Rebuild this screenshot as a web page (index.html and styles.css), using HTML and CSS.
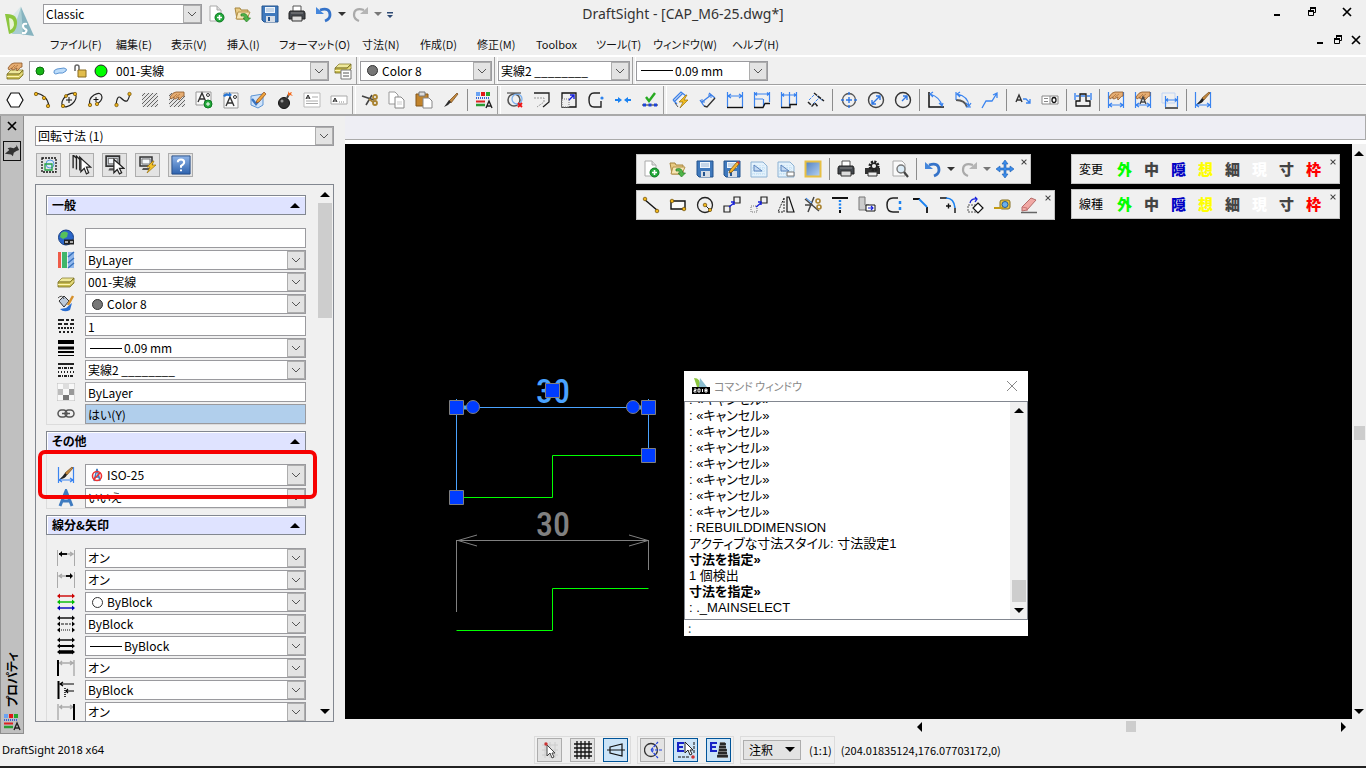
FILE: index.html
```
<!DOCTYPE html>
<html lang="ja">
<head>
<meta charset="utf-8">
<title>DraftSight - [CAP_M6-25.dwg*]</title>
<link rel="stylesheet" href="styles.css">
</head>
<body>
<svg class="sprite" aria-hidden="true">
<defs>
<linearGradient id="g-blue" x1="0" y1="0" x2="0" y2="1"><stop offset="0" stop-color="#8fb4e8"/><stop offset="1" stop-color="#2d62ae"/></linearGradient>
<linearGradient id="g-sky" x1="0" y1="0" x2="1" y2="1"><stop offset="0" stop-color="#4f7fc0"/><stop offset="1" stop-color="#b8d4f4"/></linearGradient>
</defs>
<symbol id="new" viewBox="0 0 18 18"><path d="M3 1h7l4 4v11H3z" fill="#fff" stroke="#aaa"/><path d="M10 1v4h4" fill="#ddd" stroke="#aaa"/><circle cx="12.500" cy="12.500" r="4.500" fill="#22a83a" stroke="#0c7a20"/><path d="M12.500 10v5M10 12.500h5" stroke="#fff" stroke-width="1.600"/></symbol>
<symbol id="open" viewBox="0 0 18 18"><path d="M1 3h5l1 2h7v9H3z" fill="#e9cb83" stroke="#a5843d"/><path d="M4 7h12l-3 7H2z" fill="#f7e6b4" stroke="#b4924a"/><path d="M7 9q6-2 7 4h2.500L12.500 17 9 13h2q0-3-4-2z" fill="#4fb548" stroke="#267c28" stroke-width=".7"/></symbol>
<symbol id="save" viewBox="0 0 18 18"><path d="M1 1h16v16H3l-2-2z" fill="#3f79bd" stroke="#24548e"/><path d="M4 2h10v6H4z" fill="#eef5fc"/><path d="M5 4h8M5 6h8" stroke="#9bb6d4"/><path d="M5 11h9v6H5z" fill="#d6dde6"/><path d="M7 12h2v4H7z" fill="#24548e"/></symbol>
<symbol id="saveas" viewBox="0 0 18 18"><use href="#save"/><path d="M6 13l1-3 7-8 2 2-7 8z" fill="#f5b32d" stroke="#815b12" stroke-width=".8"/><path d="M14 2l1-1 2 2-1 1z" fill="#d33"/></symbol>
<symbol id="print" viewBox="0 0 18 18"><path d="M5 1h8v6H5z" fill="#fff" stroke="#555"/><path d="M2 6h14l1 2v6H1V8z" fill="#44484e" stroke="#222"/><path d="M4 11h10v5H4z" fill="#ddd" stroke="#333"/><path d="M3 8h12" stroke="#888"/></symbol>
<symbol id="printset" viewBox="0 0 18 18"><path d="M1 8h15v6H1z" fill="#333"/><path d="M4 12h9v4H4z" fill="#eee" stroke="#333"/><circle cx="10" cy="6" r="4" fill="none" stroke="#222" stroke-width="3" stroke-dasharray="2 1.100"/><circle cx="10" cy="6" r="2.800" fill="#eee" stroke="#222" stroke-width="1.500"/></symbol>
<symbol id="preview" viewBox="0 0 18 18"><path d="M2 1h9l3 3v12H2z" fill="#fafafa" stroke="#aaa"/><circle cx="10" cy="9" r="4" fill="#dcecf7" stroke="#777" stroke-width="1.400"/><path d="M13 12l4 5" stroke="#444" stroke-width="2.200"/></symbol>
<symbol id="undo" viewBox="0 0 18 18"><path d="M5 5q10-3 10 5 0 4-5 6" fill="none" stroke="#3573c9" stroke-width="2.800"/><path d="M1 2v7h8z" fill="#4587dc"/></symbol>
<symbol id="redo" viewBox="0 0 18 18"><path d="M13 5Q3 2 3 10q0 4 5 6" fill="none" stroke="#aaa" stroke-width="2.200"/><path d="M17 2v7H9z" fill="#b5b5b5"/></symbol>
<symbol id="down" viewBox="0 0 8 18"><path d="M0 7h8L4 11z" fill="currentColor"/></symbol>
<symbol id="more" viewBox="0 0 8 18"><path d="M1 7h6v1.500H1zM1 10h6l-3 3z" fill="#2e4a74"/></symbol>
<symbol id="sheet" viewBox="0 0 18 18"><path d="M1 2h12l4 4v11H1z" fill="#e4f2fc" stroke="#8db2d3"/><path d="M4 5v9M7 5v9M10 5v9M13 5v9M2 8h14M2 11h14M2 14h14" stroke="#bcdcf2" stroke-dasharray="1 1"/><path d="M4 5v6h8z" fill="#c4daf3" stroke="#5a83bc"/></symbol>
<symbol id="sheet2" viewBox="0 0 18 18"><use href="#sheet"/><path d="M10 12h7v4h-7z" fill="#fff" stroke="#777"/></symbol>
<symbol id="view" viewBox="0 0 18 18"><path d="M1.500 1.500h15v15h-15z" fill="url(#g-sky)" stroke="#e7c044" stroke-width="2"/></symbol>
<symbol id="pan" viewBox="0 0 18 18"><path d="M9 0l3 4h-2v4h4V6l4 3-4 3v-2h-4v4h2l-3 4-3-4h2v-4H4v2L0 9l4-3v2h4V4H6z" fill="#3a8bea" stroke="#1c5cae" stroke-width=".6"/></symbol>
<symbol id="hand" viewBox="0 0 18 18"><path d="M2 6q3-5 6-5h8v4q-2 0-3 2l-2 2q-1-1 0-3L7 8q-2 0-1-2L3 8z" fill="#e6ad72" stroke="#8c5527" stroke-width=".8"/><path d="M9 3l-3 3M12 3l-4 3" stroke="#a76b34" stroke-width=".7"/></symbol>
<symbol id="layers" viewBox="0 0 18 18"><path d="M1 9l4-4h12l-4 4z" fill="#eee89a" stroke="#8a8034" stroke-width=".8"/><path d="M1 9v5h12l4-4V5l-4 4z" fill="#c7bb50" stroke="#766d24" stroke-width=".8"/><path d="M1 11.500h12l4-4" fill="none" stroke="#fff6b0"/></symbol>
<symbol id="layerhand" viewBox="0 0 18 18"><g transform="translate(0 3)"><use href="#layers" width="18" height="18"/></g><use href="#hand"/></symbol>
<symbol id="layerlist" viewBox="0 0 18 18"><use href="#layers" y="-3"/><path d="M7 8h10v9H7z" fill="#fff" stroke="#777"/><path d="M9 11h6M9 14h6" stroke="#555"/></symbol>
<symbol id="poly" viewBox="0 0 18 18"><path d="M5 2h8l4 7-4 7H5L1 9z" fill="#fff" stroke="#111" stroke-width="1.200"/></symbol>
<symbol id="arc" viewBox="0 0 18 18"><path d="M2 2q12 1 14 13" fill="none" stroke="#222" stroke-width="1.200"/><g fill="#efb51c" stroke="#6c4c05" stroke-width=".7"><circle cx="3" cy="3" r="1.700"/><circle cx="11" cy="7" r="1.700"/><circle cx="15" cy="15" r="1.700"/></g></symbol>
<symbol id="ellipse" viewBox="0 0 18 18"><ellipse cx="9" cy="9" rx="8.500" ry="5" transform="rotate(-42 9 9)" fill="none" stroke="#222" stroke-width="1.200"/><path d="M9 6v6M6 9h6" stroke="#111"/><g fill="#efb51c" stroke="#6c4c05" stroke-width=".7"><circle cx="3" cy="15" r="1.700"/><circle cx="15" cy="3" r="1.700"/><circle cx="6" cy="5" r="1.500"/></g></symbol>
<symbol id="earc" viewBox="0 0 18 18"><path d="M3 14Q1 8 7 4q7-4 8 2 0 4-5 7" fill="none" stroke="#222" stroke-width="1.200"/><path d="M9 6v5M6.500 8.500h5" stroke="#111"/><g fill="#efb51c" stroke="#6c4c05" stroke-width=".7"><circle cx="3" cy="14" r="1.700"/><circle cx="10" cy="13" r="1.700"/></g></symbol>
<symbol id="spline" viewBox="0 0 18 18"><path d="M2 15Q3 3 7 7t6 3q2-2 3-8" fill="none" stroke="#222" stroke-width="1.200"/><g fill="#efb51c" stroke="#6c4c05" stroke-width=".7"><circle cx="2.500" cy="14" r="1.700"/><circle cx="15.500" cy="3" r="1.700"/></g></symbol>
<symbol id="hatch" viewBox="0 0 18 18"><path d="M1 2h16v14H1z" fill="#e4e4e4"/><path d="M1 5l3-3M1 9l7-7M1 13l11-11M2 16L16 2M6 16L17 5M10 16l7-7M14 16l3-3" stroke="#666"/></symbol>
<symbol id="hatchhand" viewBox="0 0 18 18"><use href="#hatch"/><use href="#hand"/></symbol>
<symbol id="textadd" viewBox="0 0 18 18"><path d="M1 1h15v13H1z" fill="#fafafa" stroke="#999"/><path d="M3 11L7 2l4 9M4.500 8h5" fill="none" stroke="#333" stroke-width="1.400"/><circle cx="13" cy="4" r="1.500" fill="none" stroke="#333"/><circle cx="13" cy="13" r="4" fill="#22a83a" stroke="#0c7a20"/><path d="M13 11v4M11 13h4" stroke="#fff"/></symbol>
<symbol id="textrot" viewBox="0 0 18 18"><path d="M2 2h14v15H2z" fill="#fafafa" stroke="#999"/><path d="M4 15L8 6l4 9M5.500 12h5" fill="none" stroke="#333" stroke-width="1.400"/><circle cx="13" cy="6" r="1.500" fill="none" stroke="#333"/><path d="M1 5q2-4 6-2V1l3 3-3 2V5Q4 4 3 6z" fill="#2674d4"/></symbol>
<symbol id="check" viewBox="0 0 18 18"><path d="M2 5l12-2v11l-5 3-7-3z" fill="#cfe3fa" stroke="#5c94d4"/><path d="M3 8l4 5 8-10" fill="none" stroke="#3674c4" stroke-width="2.400"/><path d="M8 9l7-8 2 2-7 8-3 1z" fill="#f0a43a" stroke="#8d4b20" stroke-width=".7"/></symbol>
<symbol id="bomb" viewBox="0 0 18 18"><circle cx="8" cy="12" r="5.500" fill="#333" stroke="#111"/><circle cx="6" cy="10" r="1.500" fill="#999"/><path d="M11 7l2-4" stroke="#444" stroke-width="2"/><path d="M12 0l1 2 3-1-1 2 2 2-3-1-2 1z" fill="#f46a1c"/></symbol>
<symbol id="note" viewBox="0 0 18 18"><path d="M1 2h16v14H1z" fill="#fff" stroke="#bbb"/><path d="M3 8l2-4 2 4M3.500 7h3" fill="none" stroke="#222"/><path d="M9 6h6M3 10h12M3 12.500h12" stroke="#aaa"/></symbol>
<symbol id="note1" viewBox="0 0 18 18"><path d="M1 5h16v8H1z" fill="#fff" stroke="#aaa"/><path d="M3 11l2-4 2 4M3.500 10h3" fill="none" stroke="#222"/><path d="M9 11h5" stroke="#888" stroke-dasharray="1 1"/></symbol>
<symbol id="cut" viewBox="0 0 18 18"><path d="M1 5l12 4M5 14l6-10" stroke="#444" stroke-width="1.600"/><g fill="none" stroke="#a98330" stroke-width="1.800"><circle cx="14" cy="6" r="2"/><circle cx="14" cy="12" r="2"/></g><path d="M8 8l4 3" stroke="#a98330" stroke-width="1.600"/></symbol>
<symbol id="copy" viewBox="0 0 18 18"><path d="M1 1h6l3 3v9H1z" fill="#fff" stroke="#999"/><path d="M7 6h6l3 3v8H7z" fill="#fff" stroke="#888"/><path d="M9 11h5M9 13h5" stroke="#ccc"/></symbol>
<symbol id="paste" viewBox="0 0 18 18"><path d="M1 3h12v12H1z" fill="#c2842c" stroke="#84561a"/><path d="M4 1h6v4H4z" fill="#ddd" stroke="#777"/><path d="M8 7h6l3 3v7H8z" fill="#fff" stroke="#888"/></symbol>
<symbol id="brush" viewBox="0 0 18 18"><path d="M7 10l8-8 1 1-7 9z" fill="#c48a3e" stroke="#6f4518" stroke-width=".7"/><path d="M7 9l2 2q-3 4-7 5 3-4 5-7z" fill="#2c2c2c"/></symbol>
<symbol id="props" viewBox="0 0 18 18"><path d="M1 1h4v4H1z" fill="#6aa2f2"/><path d="M6 1h4v4H6z" fill="#e01818"/><path d="M11 1h4v4h-4z" fill="#27a52e"/><path d="M1 7h13" stroke="#3564d8" stroke-width="2" stroke-dasharray="1 1"/><path d="M1 10.500h9" stroke="#d22" stroke-width="2"/><path d="M1 14h9" stroke="#2a9c34" stroke-width="2.500"/><path d="M11 17l3-7 3 7M12 15h4" fill="none" stroke="#222" stroke-width="1.400"/></symbol>
<symbol id="zoomx" viewBox="0 0 18 18"><circle cx="8" cy="9" r="6" fill="none" stroke="#555" stroke-width="1.600"/><circle cx="11" cy="8" r="5" fill="none" stroke="#7cb1ef" stroke-width="1.300"/><path d="M1 2h14" stroke="#333"/><path d="M12 12l4 4M16 12l-4 4" stroke="#e11" stroke-width="1.800"/></symbol>
<symbol id="offset" viewBox="0 0 18 18"><path d="M1 2h15v9l-6 5" fill="none" stroke="#222" stroke-width="1.300"/><path d="M1 7h10v4L4 16" fill="none" stroke="#999" stroke-dasharray="2 1"/></symbol>
<symbol id="scale" viewBox="0 0 18 18"><path d="M2 2h14v14H2z" fill="none" stroke="#111" stroke-width="1.300"/><path d="M2 8h7v8H2z" fill="#eee" stroke="#777" stroke-dasharray="1 1"/><path d="M9 9l5-5M14 8V4h-4" fill="none" stroke="#1620dc" stroke-width="1.400"/></symbol>
<symbol id="closec" viewBox="0 0 18 18"><path d="M13 2H7Q2 2 2 9t5 7h7V10" fill="none" stroke="#222" stroke-width="1.400"/><circle cx="15" cy="7" r="1.600" fill="#2c82ed"/></symbol>
<symbol id="join" viewBox="0 0 18 18"><path d="M1 8h3V6l4 3-4 3v-2H1zM17 8h-3V6l-4 3 4 3v-2h3z" fill="#1b82f1"/></symbol>
<symbol id="edit" viewBox="0 0 18 18"><path d="M5 6l3 4 6-8" fill="none" stroke="#27aa21" stroke-width="2.400"/><path d="M1 14h16" stroke="#222"/><path d="M2 12.500h3v3H2zM7.500 12.500h3v3h-3zM13 12.500h3v3h-3z" fill="#1d44d9"/></symbol>
<symbol id="dimsmart" viewBox="0 0 18 18"><path d="M1 9l8-8 5 4M1 9l4 4M2 11l9-9" fill="none" stroke="#3a7fe8" stroke-width="1.300"/><path d="M3 12l3 4" stroke="#555"/><path d="M14 4l-7 7h4l-3 6 8-8h-4l3-5z" fill="#f2bd20" stroke="#99710d" stroke-width=".7"/></symbol>
<symbol id="dimalign" viewBox="0 0 18 18"><path d="M1 9l4 6M10 2l6 5M3 11l9-7" fill="none" stroke="#3a7fe8" stroke-width="1.300"/><path d="M3 8v3h3M9 4h3v3" fill="none" stroke="#3a7fe8"/><path d="M5 15l3 1 8-9" fill="none" stroke="#333" stroke-width="1.400"/></symbol>
<symbol id="dimlin" viewBox="0 0 18 18"><path d="M1.500 1v15M16.500 1v15M2 5h14M5 3L2 5l3 2M13 3l3 2-3 2" fill="none" stroke="#3a84f0" stroke-width="1.200"/><path d="M1 16.500h16" stroke="#111" stroke-width="1.400"/></symbol>
<symbol id="dimbase" viewBox="0 0 18 18"><path d="M1.500 1v15M16.500 1v10M2 3h14M2 8h8M10.500 8v8M4 1.500L2 3l2 1.500M14 1.500L16 3l-2 1.500" fill="none" stroke="#3a84f0" stroke-width="1.200"/><path d="M1 16.500h9l2-4h5" fill="none" stroke="#111" stroke-width="1.300"/></symbol>
<symbol id="dimcont" viewBox="0 0 18 18"><path d="M1.500 1v15M9.500 1v14M16.500 1v12M2 4h14M4 2.500L2 4l2 1.500M14 2.500L16 4l-2 1.500" fill="none" stroke="#3a84f0" stroke-width="1.200"/><path d="M1 16.500h9v-3h7" fill="none" stroke="#111" stroke-width="1.300"/></symbol>
<symbol id="dimob" viewBox="0 0 18 18"><path d="M2 9l5-5M6 13l6-6M10 5l6 5" stroke="#3a84f0" stroke-dasharray="3 1"/><path d="M1 11l4 4 3-3 3 4M7 2l10 8" fill="none" stroke="#222" stroke-width="1.500" stroke-dasharray="4 1"/></symbol>
<symbol id="center" viewBox="0 0 18 18"><circle cx="9" cy="9" r="6.500" fill="none" stroke="#555" stroke-width="1.300"/><path d="M9 1v3M9 6v6M9 14v3M1 9h3M6 9h6M14 9h3" stroke="#2f77e4" stroke-width="1.400"/></symbol>
<symbol id="diam" viewBox="0 0 18 18"><circle cx="9" cy="9" r="7.500" fill="none" stroke="#444" stroke-width="1.400"/><path d="M5 13L13 5M13 9V5H9M5 9v4h4" fill="none" stroke="#2f77e4" stroke-width="1.400"/></symbol>
<symbol id="radius" viewBox="0 0 18 18"><circle cx="9" cy="9" r="7.500" fill="none" stroke="#333" stroke-width="1.400"/><path d="M8 10l5-5M13 9V5H9" fill="none" stroke="#2f77e4" stroke-width="1.400"/></symbol>
<symbol id="dimang" viewBox="0 0 18 18"><path d="M2 1v15h15" fill="none" stroke="#111" stroke-width="1.500"/><path d="M3 3q10 3 12 12M6 1L3 3l3 3M12 12l3 3 1-3" fill="none" stroke="#3a84f0" stroke-width="1.200"/></symbol>
<symbol id="dimarc" viewBox="0 0 18 18"><path d="M2 9q9 0 11 7" fill="none" stroke="#555" stroke-width="2"/><path d="M2 1v8M17 16h-5M3 3q11 2 12 12M6 1L3 3l3 3M12 12l3 3 2-3" fill="none" stroke="#3a84f0" stroke-width="1.200"/></symbol>
<symbol id="ord" viewBox="0 0 18 18"><path d="M1 17l4-7h6l5-8M12 4l4-2v5" fill="none" stroke="#3a84f0" stroke-width="1.300"/></symbol>
<symbol id="leader" viewBox="0 0 18 18"><path d="M2 11l3-7 3 7M3 9h4" fill="none" stroke="#333" stroke-width="1.400"/><path d="M9 8h3l4 4M16 8v4h-4" fill="none" stroke="#3a84f0" stroke-width="1.300"/></symbol>
<symbol id="tol" viewBox="0 0 18 18"><path d="M1 5h16v8H1z" fill="#fff" stroke="#888"/><path d="M9 5v8M3 7.500h4M3 10.500h4" stroke="#888"/><ellipse cx="13" cy="9" rx="2" ry="2.500" fill="none" stroke="#111" stroke-width="1.300"/></symbol>
<symbol id="dimchk" viewBox="0 0 18 18"><path d="M1 2v7M17 2v7M2 5h3M16 5h-3M7 5h4" stroke="#3a84f0" stroke-width="1.400"/><path d="M2 15v-5h4V3h6v7h4v5z" fill="none" stroke="#111" stroke-width="1.300"/></symbol>
<symbol id="dimbar" viewBox="0 0 18 18"><path d="M1.500 1v16M16.500 1v16M2 14h14M5 12l-3 2 3 2M13 12l3 2-3 2" fill="none" stroke="#3a84f0" stroke-width="1.200"/></symbol>
<symbol id="dimhand" viewBox="0 0 18 18"><use href="#dimbar"/><use href="#hand"/></symbol>
<symbol id="dimhandA" viewBox="0 0 18 18"><use href="#dimbar"/><use href="#hand"/><path d="M6 13l3-7 3 7M7 11h4" fill="none" stroke="#444" stroke-width="1.400"/></symbol>
<symbol id="dimrep" viewBox="0 0 18 18"><path d="M1 2h13v10H1z" fill="none" stroke="#c0d4f5"/><path d="M4.500 5v11M16.500 5v11M5 9h11M7 7.500L5 9l2 1.500M14 7.500L16 9l-2 1.500" fill="none" stroke="#3a84f0" stroke-width="1.200"/><path d="M4 17h13" stroke="#111" stroke-width="1.300"/></symbol>
<symbol id="dimbrush" viewBox="0 0 18 18"><use href="#dimbar"/><path d="M8 7l7-6 1 1-6 7z" fill="#c48a3e" stroke="#6f4518" stroke-width=".7"/><path d="M8 7l2 2q-2 4-7 4 3-3 5-6z" fill="#222"/></symbol>
<symbol id="line" viewBox="0 0 18 18"><path d="M2 3l14 12" stroke="#111" stroke-width="1.400"/><g fill="#efb51c" stroke="#6c4c05" stroke-width=".7"><circle cx="3" cy="3" r="1.800"/><circle cx="15" cy="15" r="1.800"/></g></symbol>
<symbol id="rect" viewBox="0 0 18 18"><path d="M2 5h14v8H2z" fill="#fafafa" stroke="#111" stroke-width="1.400"/><g fill="#efb51c" stroke="#6c4c05" stroke-width=".7"><circle cx="3" cy="5" r="1.800"/><circle cx="15" cy="13" r="1.800"/></g></symbol>
<symbol id="circle" viewBox="0 0 18 18"><circle cx="9" cy="9" r="7.500" fill="none" stroke="#222" stroke-width="1.300"/><path d="M9 9l5 5" stroke="#222"/><g fill="#efb51c" stroke="#6c4c05" stroke-width=".7"><circle cx="9" cy="9" r="1.800"/><circle cx="14" cy="14" r="1.600"/></g></symbol>
<symbol id="copyent" viewBox="0 0 18 18"><path d="M1 10h6v6H1zM11 1h6v6h-6z" fill="none" stroke="#222" stroke-width="1.200"/><path d="M6 11l5-4M8 6h3v3" fill="none" stroke="#1620dc" stroke-width="1.400"/></symbol>
<symbol id="move" viewBox="0 0 18 18"><path d="M11 1h6v6h-6z" fill="none" stroke="#222" stroke-width="1.200"/><path d="M1 10h6v6H1z" fill="none" stroke="#777" stroke-dasharray="1 1"/><path d="M6 11l5-4M8 6h3v3" fill="none" stroke="#1620dc" stroke-width="1.400"/></symbol>
<symbol id="mirror" viewBox="0 0 18 18"><path d="M7 2v14H1z" fill="none" stroke="#222" stroke-dasharray="2 1"/><path d="M10 1v15h7L12 1z" fill="none" stroke="#111" stroke-width="1.200"/></symbol>
<symbol id="trimx" viewBox="0 0 18 18"><path d="M1 3l14 12M10 1L4 16M1 9h8" stroke="#444" stroke-width="1.500"/><path d="M2 2l6 5" stroke="#2b83f2"/><g fill="none" stroke="#a98330" stroke-width="1.600"><circle cx="14" cy="5" r="2"/><circle cx="15" cy="11" r="2"/></g></symbol>
<symbol id="extend" viewBox="0 0 18 18"><path d="M1 2h16M9 14v3" stroke="#111" stroke-width="2"/><path d="M9 4v9" stroke="#1b82f1" stroke-width="2.400" stroke-dasharray="2 1.500"/></symbol>
<symbol id="stretch" viewBox="0 0 18 18"><path d="M1 1h6v8h4v5H1z" fill="#ccc" stroke="#777"/><path d="M8 9h9v6H8z" fill="#fff" stroke="#111"/><path d="M10 12h5M13 10l2 2-2 2" fill="none" stroke="#1620dc" stroke-width="1.200"/></symbol>
<symbol id="split" viewBox="0 0 18 18"><path d="M13 2H8Q2 2 2 9t6 7h6" fill="none" stroke="#222" stroke-width="1.500"/><path d="M15 5v9" stroke="#1b82f1" stroke-width="2.500" stroke-dasharray="3 3"/></symbol>
<symbol id="chamfer" viewBox="0 0 18 18"><path d="M1 3h7M15 11v6" stroke="#111" stroke-width="1.800"/><path d="M7 3l8 8" stroke="#1b82f1" stroke-width="1.800"/></symbol>
<symbol id="fillet" viewBox="0 0 18 18"><path d="M1 2h7M16 12v5M7 10h5M9.500 7.500v5" stroke="#111" stroke-width="1.400"/><path d="M7 2q8 0 9 10" fill="none" stroke="#1b82f1" stroke-width="1.600"/></symbol>
<symbol id="rotate" viewBox="0 0 18 18"><path d="M2 9h8v7H2z" fill="none" stroke="#555" stroke-dasharray="2 1"/><path d="M12 7l5 5-5 5-5-5z" fill="#fff" stroke="#111" stroke-width="1.200"/><path d="M4 7q1-5 7-4M9 1l2 2-2 3" fill="none" stroke="#1620dc" stroke-width="1.300"/></symbol>
<symbol id="measure" viewBox="0 0 18 18"><rect x="7" y="4" width="10" height="9" rx="2" fill="#e7c240" stroke="#857022"/><circle cx="12" cy="8.500" r="3" fill="#6ab0ec" stroke="#265b95"/><path d="M1 12h9" stroke="#c49c16" stroke-width="2"/></symbol>
<symbol id="erase" viewBox="0 0 18 18"><path d="M2 11l9-9 5 2-9 10-5 1z" fill="#f1a8a4" stroke="#b56b69"/><path d="M2 11l5 1v3" fill="none" stroke="#c77"/><path d="M1 16.500h16" stroke="#666" stroke-width="1.500"/></symbol>
<symbol id="globe" viewBox="0 0 18 18"><circle cx="9" cy="8.500" r="7.500" fill="#2a66c9" stroke="#173f85"/><path d="M4 4q4-3 7 0l-1 4-4 2-3-2z" fill="#57c05a"/><path d="M7 13h10" stroke="#222" stroke-width="5"/><path d="M8 13h3M13 13h3" stroke="#ddd" stroke-width="1.500"/></symbol>
<symbol id="bars" viewBox="0 0 18 18"><path d="M1 1h3v16H1z" fill="#ef5c49"/><path d="M5 1h5v16H5z" fill="#40b66b"/><path d="M11 1h6v16h-6z" fill="#92b8ec"/><path d="M11 6l6-5M11 12l6-5M11 17l6-5" stroke="#3972bd" stroke-width="1.500"/></symbol>
<symbol id="bucket" viewBox="0 0 18 18"><path d="M2 6l5-5 5 5-5 6z" fill="#bcc9da" stroke="#333"/><path d="M16 1l-5 9" stroke="#d6902b" stroke-width="2.500"/><path d="M3 14q4 4 10 1l2-7-6 5z" fill="#296dd0"/><path d="M1 3q4-4 6 1" fill="none" stroke="#444"/></symbol>
<symbol id="ltscale" viewBox="0 0 18 18"><path d="M1 3h16" stroke="#222" stroke-width="2" stroke-dasharray="6 2 3 2"/><path d="M1 7h16" stroke="#222" stroke-width="2" stroke-dasharray="4 2"/><path d="M1 11h16" stroke="#222" stroke-width="2" stroke-dasharray="2 1"/><path d="M2 15h14" stroke="#222" stroke-width="2" stroke-dasharray="2 2"/></symbol>
<symbol id="lw" viewBox="0 0 18 18"><path d="M1 3h16" stroke="#000" stroke-width="4"/><path d="M1 9h16" stroke="#000" stroke-width="3"/><path d="M1 13h16" stroke="#000" stroke-width="2"/><path d="M1 16.500h16" stroke="#000"/></symbol>
<symbol id="lt" viewBox="0 0 18 18"><path d="M1 3h16" stroke="#222" stroke-width="2"/><path d="M1 7h16M1 15h16" stroke="#222" stroke-width="2" stroke-dasharray="3 1 1 1"/><path d="M1 11h16" stroke="#222" stroke-width="2" stroke-dasharray="1 2"/></symbol>
<symbol id="trans" viewBox="0 0 18 18"><path d="M0 0h18v18H0z" fill="#f8f8f8" stroke="#bbb"/><path d="M6 1h6v5H6z" fill="#ddd"/><path d="M1 6h5v6H1z" fill="#bbb"/><path d="M12 6h5v6h-5z" fill="#999"/><path d="M6 12h6v5H6z" fill="#777"/></symbol>
<symbol id="link" viewBox="0 0 18 18"><g fill="none" stroke="#555" stroke-width="1.500"><rect x="1" y="5" width="9" height="7" rx="3.500"/><rect x="8" y="5" width="9" height="7" rx="3.500"/><path d="M5 8.500h8"/></g></symbol>
<symbol id="bigA" viewBox="0 0 18 18"><path d="M3 17L9 2l6 15M5 12h8" fill="none" stroke="#3e7bc0" stroke-width="3"/></symbol>
<symbol id="dl1" viewBox="0 0 18 18"><path d="M0 1v16M18 1v16" stroke="#aaa" stroke-width="2"/><path d="M9 5h6M13 3l3 2-3 2" fill="none" stroke="#aaa" stroke-width="1.400"/><path d="M2 5h8" stroke="#111" stroke-width="2"/><path d="M2 5l3-3v6z"/></symbol>
<symbol id="dl2" viewBox="0 0 18 18"><path d="M0 1v16M18 1v16" stroke="#aaa" stroke-width="2"/><path d="M2 5h8M5 3L2 5l3 2" fill="none" stroke="#aaa" stroke-width="1.400"/><path d="M9 5h6" stroke="#111" stroke-width="2"/><path d="M16 5l-3-3v6z"/></symbol>
<symbol id="arw" viewBox="0 0 18 6"><path d="M2 3h14" stroke="currentColor" stroke-width="1.400"/><path d="M0 3l3-2.500v5zM18 3l-3-2.500v5z" fill="currentColor"/></symbol>
<symbol id="dlcol" viewBox="0 0 18 18"><use href="#arw" width="18" height="6" color="#c00"/><use href="#arw" y="6" width="18" height="6" color="#0b0"/><use href="#arw" y="12" width="18" height="6" color="#00b"/></symbol>
<symbol id="dllt" viewBox="0 0 18 18"><use href="#arw" width="18" height="6"/><path d="M0 9l3-2.500v5zM18 9l-3-2.500v5zM0 15l3-2.500v5zM18 15l-3-2.500v5z"/><path d="M4 9h10" stroke="#111" stroke-dasharray="3 1"/><path d="M4 15h10" stroke="#111" stroke-dasharray="1 1"/></symbol>
<symbol id="dllw" viewBox="0 0 18 18"><use href="#arw" width="18" height="6"/><use href="#arw" y="6" width="18" height="6"/><use href="#arw" y="12" width="18" height="6"/><path d="M3 9h12" stroke="#000" stroke-width="2"/><path d="M3 15h12" stroke="#000" stroke-width="3.500"/></symbol>
<symbol id="ex1" viewBox="0 0 18 18"><path d="M17 1v16M2 4h14M5 2L3 4l2 2M13 2l3 2-3 2" fill="none" stroke="#aaa" stroke-width="1.400"/><path d="M1 1v16" stroke="#000" stroke-width="2"/></symbol>
<symbol id="ex2" viewBox="0 0 18 18"><path d="M1.500 0v18" stroke="#000" stroke-width="2"/><path d="M3 3h14M9 10h8M6 1L3 3l3 2M11 8l-2 2 2 2" fill="none" stroke="#000" stroke-width="1.200"/><path d="M8 7v10" stroke="#000" stroke-width="1.500" stroke-dasharray="1 1"/></symbol>
<symbol id="ex3" viewBox="0 0 18 18"><path d="M1 1v16M2 4h14M5 2L3 4l2 2M13 2l3 2-3 2" fill="none" stroke="#aaa" stroke-width="1.400"/><path d="M17 1v16" stroke="#000" stroke-width="2"/></symbol>
<symbol id="select" viewBox="0 0 18 18"><path d="M2 2h14v14H2z" fill="none" stroke="#111" stroke-width="1.300" stroke-dasharray="2 1"/><circle cx="10" cy="8" r="4" fill="#dbeafa" stroke="#5b98df"/><path d="M5 8h7v6H5z" fill="none" stroke="#25a245" stroke-width="1.300"/></symbol>
<symbol id="cursor" viewBox="0 0 18 18"><path d="M6 2v12l3-3 2 6 2-1-2-5h4z" fill="#fff" stroke="#222" stroke-width="1.100"/></symbol>
<symbol id="cursors" viewBox="0 0 18 18"><path d="M1 12V0l3 3M4 13V1l3 3M7 14V2l2 2" fill="none" stroke="#222" stroke-width="1.200"/><path d="M8 3v12l3-3 2 5 2-1-2-5h4z" fill="#fff" stroke="#222" stroke-width="1.100"/></symbol>
<symbol id="screen" viewBox="0 0 18 18"><path d="M1 1h12v9H1z" fill="#d5dae0" stroke="#333" stroke-width="1.500"/><path d="M3 3h8v5H3z" fill="#f4f8fc" stroke="#777"/><path d="M4 12h7v2H3z" fill="#555"/></symbol>
<symbol id="screencur" viewBox="0 0 18 18"><use href="#screen"/><path d="M8 4v12l3-3 2 4 2-1-2-4h4z" fill="#fff" stroke="#222" stroke-width="1.100"/></symbol>
<symbol id="screenbolt" viewBox="0 0 18 18"><use href="#screen"/><path d="M14 5l-6 6h3l-3 6 9-8h-4l2-4z" fill="#f6c52a" stroke="#99710d" stroke-width=".7"/></symbol>
<symbol id="help" viewBox="0 0 22 22"><path d="M1 1h20v20H1z" fill="url(#g-blue)" stroke="#244b83"/><path d="M7.500 8q0-3 3.500-3t3.500 3q0 2-3.500 4v2M11 16v2" fill="none" stroke="#fff" stroke-width="2.200"/></symbol>
<symbol id="pin" viewBox="0 0 18 18"><path d="M1 12l5-4-2-2 3-1 4 1 3-2V2l3 6-3 1-3 2-1 4-2-2z" fill="#333"/></symbol>
<symbol id="snap" viewBox="0 0 18 18"><path d="M1 4h16M1 9h16M1 14h16M4 1v16M9 1v16M14 1v16" stroke="#ccc"/><path d="M6 4v11l3-3 2 5 2-1-2-4h3z" fill="#fff" stroke="#444"/><circle cx="5" cy="3" r="1.700" fill="#c33"/></symbol>
<symbol id="grid" viewBox="0 0 18 18"><path d="M0 3h18M0 7h18M0 11h18M0 15h18M3 0v18M7 0v18M11 0v18M15 0v18" stroke="#111" stroke-width="1.300"/></symbol>
<symbol id="ortho" viewBox="0 0 18 18"><path d="M3 6l12-3v12L3 12z" fill="none" stroke="#111" stroke-width="1.200"/><path d="M0 9h18" stroke="#111"/></symbol>
<symbol id="polar" viewBox="0 0 18 18"><circle cx="7" cy="9" r="6.500" fill="none" stroke="#333" stroke-width="1.300"/><path d="M7 9h11M7 9l7-8M7 9l7 8" stroke="#2344dd" stroke-width="1.200" stroke-dasharray="3 1"/></symbol>
<symbol id="E" viewBox="0 0 18 18"><path d="M7 2H1v8h6M1 6h5" fill="none" stroke="#1723c6" stroke-width="2.200"/></symbol>
<symbol id="esnap" viewBox="0 0 18 18"><use href="#E"/><path d="M8 1v11l3-3 2 5 2-1-2-4h3z" fill="#fff" stroke="#222"/><path d="M1 16h11M17 1v11" stroke="#111" stroke-dasharray="3 1"/><circle cx="16" cy="16" r="1.800" fill="#c33"/></symbol>
<symbol id="etrack" viewBox="0 0 18 18"><use href="#E"/><path d="M10 1h5l3 16H7z" fill="#777"/><path d="M10 3h6M9 6h7M9 9h8M8 12h9M7 15h11" stroke="#111" stroke-width="1.500"/></symbol>
<symbol id="up" viewBox="0 0 10 10"><path d="M0 8h10L5 3z"/></symbol>
<symbol id="dn" viewBox="0 0 10 10"><path d="M0 2h10L5 7z"/></symbol>
<symbol id="lf" viewBox="0 0 10 10"><path d="M7 0v10L2 5z"/></symbol>
<symbol id="rt" viewBox="0 0 10 10"><path d="M3 0v10l5-5z"/></symbol>
<symbol id="x" viewBox="0 0 10 10"><path d="M1 1l8 8M9 1L1 9" stroke="currentColor" stroke-width="1.700"/></symbol>
<symbol id="min" viewBox="0 0 10 10"><path d="M2 7h6v2H2z"/></symbol>
<symbol id="restore" viewBox="0 0 10 10"><path d="M3.500 3V1.500h5v4H7M1.500 4.500h5v4h-5z" fill="none" stroke="#000"/><path d="M3 1h6M1 4h6" stroke="#000" stroke-width="1.800"/></symbol>
<symbol id="noiso" viewBox="0 0 12 14"><path d="M3 13L6 1l3 12M4 9h4" fill="none" stroke="#3e7bc0" stroke-width="1.500"/><circle cx="6" cy="8" r="4.500" fill="none" stroke="#e33" stroke-width="1.600"/><path d="M3 11l6-6" stroke="#e33" stroke-width="1.600"/></symbol>
</svg>

<header class="header">
  <svg class="logo" viewBox="0 0 32 34" role="img" aria-label="DraftSight"><path d="M17 0L3 16l17 14z" fill="#dbe9ea"/><path d="M17 1l13 29-14-2z" fill="#86b3bf"/><path d="M17 1L8 28h11z" fill="#a9cdd3"/><path d="M1 8q13-1 12 10-1 9-8 10z" fill="#8cc63f"/><path d="M5 12q5 0 5 7-1 4-4 5z" fill="#e9f4d3"/><path d="M23 18q-4-1-4 2 0 2 2 3 3 1 0 4h-3" fill="none" stroke="#fff" stroke-width="2.200"/></svg>
  <div class="quick">
    <div class="combo workspace"><select aria-label="ワークスペース"><option>Classic</option></select></div>
    <button class="tool" aria-label="新規"><svg><use href="#new"/></svg></button><button class="tool" aria-label="開く"><svg><use href="#open"/></svg></button><button class="tool" aria-label="保存"><svg><use href="#save"/></svg></button><button class="tool" aria-label="印刷"><svg><use href="#print"/></svg></button><button class="tool" aria-label="元に戻す"><svg><use href="#undo"/></svg></button><button class="drop" aria-label="元に戻す履歴"><svg><use href="#down"/></svg></button><button class="tool" aria-label="やり直し"><svg><use href="#redo"/></svg></button><button class="drop muted" aria-label="やり直し履歴"><svg><use href="#down"/></svg></button><button class="drop more" aria-label="カスタマイズ"><svg><use href="#more"/></svg></button>
  </div>
  <h1 class="title">DraftSight - [CAP_M6-25.dwg*]</h1>
  <div class="winctl"><button aria-label="最小化"><svg><use href="#min"/></svg></button><button aria-label="元のサイズ"><svg><use href="#restore"/></svg></button><button aria-label="閉じる"><svg><use href="#x"/></svg></button></div>
  <nav class="menubar">
    <ul>
      <li><a href="#">ファイル(F)</a></li><li><a href="#">編集(E)</a></li><li><a href="#">表示(V)</a></li><li><a href="#">挿入(I)</a></li><li><a href="#">フォーマット(O)</a></li><li><a href="#">寸法(N)</a></li><li><a href="#">作成(D)</a></li><li><a href="#">修正(M)</a></li><li><a href="#">Toolbox</a></li><li><a href="#">ツール(T)</a></li><li><a href="#">ウィンドウ(W)</a></li><li><a href="#">ヘルプ(H)</a></li>
    </ul>
    <div class="docctl"><button aria-label="図面を最小化"><svg><use href="#min"/></svg></button><button aria-label="図面を元のサイズに戻す"><svg><use href="#restore"/></svg></button><button aria-label="図面を閉じる"><svg><use href="#x"/></svg></button></div>
  </nav>
</header>

<div class="layerbar">
  <button class="tool layer" aria-label="画層管理"><svg><use href="#layerhand"/></svg></button>
  <div class="combo layers"><svg class="states" viewBox="0 0 76 16"><circle cx="8" cy="8" r="4" fill="#17b417" stroke="#0b6e0b"/><path d="M22 10q-1-3 3-4l7-1q4 1 2 3-3 3-7 2-4 2-5 0z" fill="#bcdcfa" stroke="#5e95d2"/><path d="M43 8V4q0-2 2-2t2 2v4" fill="none" stroke="#666" stroke-width="1.500"/><path d="M46 7h8v7h-8z" fill="#e2bd4c" stroke="#8b6c1e"/><circle cx="69" cy="8" r="6" fill="#0f0" stroke="#222"/></svg><select aria-label="画層"><option>001-実線</option></select></div>
  <button class="tool" aria-label="画層プロパティ"><svg><use href="#layerlist"/></svg></button>
  <span class="split"></span>
  <div class="combo std"><span class="dot"></span><select aria-label="線色"><option>Color 8</option></select></div>
  <span class="split"></span>
  <div class="combo std"><select aria-label="線種"><option>実線2 ________</option></select></div>
  <span class="split"></span>
  <div class="combo std"><span class="rule"></span><select aria-label="線幅"><option>0.09 mm</option></select></div>
</div>

<div class="toolbar">
  <button class="tool" aria-label="ポリゴン"><svg><use href="#poly"/></svg></button><button class="tool" aria-label="円弧"><svg><use href="#arc"/></svg></button><button class="tool" aria-label="楕円"><svg><use href="#ellipse"/></svg></button><button class="tool" aria-label="楕円弧"><svg><use href="#earc"/></svg></button><button class="tool" aria-label="スプライン"><svg><use href="#spline"/></svg></button><button class="tool" aria-label="ハッチング"><svg><use href="#hatch"/></svg></button><button class="tool" aria-label="ハッチング編集"><svg><use href="#hatchhand"/></svg></button><button class="tool" aria-label="文字追加"><svg><use href="#textadd"/></svg></button><button class="tool" aria-label="文字編集"><svg><use href="#textrot"/></svg></button><button class="tool" aria-label="スペルチェック"><svg><use href="#check"/></svg></button><button class="tool" aria-label="分解"><svg><use href="#bomb"/></svg></button><button class="tool" aria-label="注釈"><svg><use href="#note"/></svg></button><button class="tool" aria-label="簡易注釈"><svg><use href="#note1"/></svg></button>
  <span class="split"></span>
  <button class="tool" aria-label="切り取り"><svg><use href="#cut"/></svg></button><button class="tool" aria-label="コピー"><svg><use href="#copy"/></svg></button><button class="tool" aria-label="貼り付け"><svg><use href="#paste"/></svg></button><button class="tool" aria-label="書式コピー"><svg><use href="#brush"/></svg></button>
  <span class="sep"></span>
  <button class="tool" aria-label="プロパティ"><svg><use href="#props"/></svg></button>
  <span class="split"></span>
  <button class="tool" aria-label="重複削除"><svg><use href="#zoomx"/></svg></button><button class="tool" aria-label="オフセット"><svg><use href="#offset"/></svg></button><button class="tool" aria-label="尺度"><svg><use href="#scale"/></svg></button><button class="tool" aria-label="点で分割"><svg><use href="#closec"/></svg></button><button class="tool" aria-label="結合"><svg><use href="#join"/></svg></button><button class="tool" aria-label="ポリライン編集"><svg><use href="#edit"/></svg></button>
  <span class="split"></span>
  <button class="tool" aria-label="スマート寸法"><svg><use href="#dimsmart"/></svg></button><button class="tool" aria-label="平行寸法"><svg><use href="#dimalign"/></svg></button><button class="tool" aria-label="長さ寸法"><svg><use href="#dimlin"/></svg></button><button class="tool" aria-label="並列寸法"><svg><use href="#dimbase"/></svg></button><button class="tool" aria-label="直列寸法"><svg><use href="#dimcont"/></svg></button><button class="tool" aria-label="傾斜寸法"><svg><use href="#dimob"/></svg></button>
  <span class="sep"></span>
  <button class="tool" aria-label="中心マーク"><svg><use href="#center"/></svg></button><button class="tool" aria-label="直径"><svg><use href="#diam"/></svg></button><button class="tool" aria-label="半径"><svg><use href="#radius"/></svg></button>
  <span class="sep"></span>
  <button class="tool" aria-label="角度"><svg><use href="#dimang"/></svg></button><button class="tool" aria-label="弧長"><svg><use href="#dimarc"/></svg></button><button class="tool" aria-label="座標"><svg><use href="#ord"/></svg></button>
  <span class="sep"></span>
  <button class="tool" aria-label="引出線"><svg><use href="#leader"/></svg></button><button class="tool" aria-label="公差"><svg><use href="#tol"/></svg></button>
  <span class="sep"></span>
  <button class="tool" aria-label="寸法検査"><svg><use href="#dimchk"/></svg></button>
  <span class="sep"></span>
  <button class="tool" aria-label="寸法編集"><svg><use href="#dimhand"/></svg></button><button class="tool" aria-label="寸法文字編集"><svg><use href="#dimhandA"/></svg></button><button class="tool" aria-label="寸法更新"><svg><use href="#dimrep"/></svg></button>
  <span class="sep"></span>
  <button class="tool" aria-label="寸法スタイル"><svg><use href="#dimbrush"/></svg></button>
</div>

<main class="main">
  <div class="strip">
    <button aria-label="パネルを閉じる"><svg class="s10"><use href="#x"/></svg></button>
    <button class="pin" aria-label="固定"><svg class="s16"><use href="#pin"/></svg></button>
    <span class="striptitle">プロパティ</span>
    <svg class="s18"><use href="#props"/></svg>
  </div>
  <aside class="panel">
    <div class="combo"><select aria-label="選択対象"><option>回転寸法 (1)</option></select></div>
    <div class="panelbtns"><button aria-label="選択"><svg class="s18"><use href="#select"/></svg></button><button aria-label="複数選択"><svg class="s20"><use href="#cursors"/></svg></button><button aria-label="画面選択"><svg class="s20"><use href="#screencur"/></svg></button><button aria-label="クイック選択"><svg class="s18"><use href="#screenbolt"/></svg></button><button aria-label="ヘルプ"><svg class="s20"><use href="#help"/></svg></button></div>
    <div class="tree">
      <div class="treebody">
        <section>
          <h2><button>一般<svg class="s10"><use href="#up"/></svg></button></h2>
          <div class="rows">
            <label><svg><use href="#globe"/></svg><input aria-label="ハイパーリンク"></label>
            <label><svg><use href="#bars"/></svg><span class="combo"><select aria-label="印刷スタイル"><option>ByLayer</option></select></span></label>
            <label><svg><use href="#layers"/></svg><span class="combo"><select aria-label="画層"><option>001-実線</option></select></span></label>
            <label><svg><use href="#bucket"/></svg><span class="combo"><span class="dot"></span><select aria-label="線色"><option>Color 8</option></select></span></label>
            <label><svg><use href="#ltscale"/></svg><input aria-label="線種尺度" value="1"></label>
            <label><svg><use href="#lw"/></svg><span class="combo"><span class="rule"></span><select aria-label="線幅"><option>0.09 mm</option></select></span></label>
            <label><svg><use href="#lt"/></svg><span class="combo"><select aria-label="線種"><option>実線2 ________</option></select></span></label>
            <label><svg><use href="#trans"/></svg><input aria-label="透過度" value="ByLayer"></label>
            <label><svg><use href="#link"/></svg><input class="active" aria-label="関連" value="はい(Y)"></label>
          </div>
        </section>
        <section>
          <h2><button>その他<svg class="s10"><use href="#up"/></svg></button></h2>
          <div class="rows">
            <label class="tall"><svg><use href="#dimbrush"/></svg><span class="combo"><svg class="noiso"><use href="#noiso"/></svg><select aria-label="寸法スタイル"><option>ISO-25</option></select></span></label>
            <label><svg><use href="#bigA"/></svg><span class="combo"><select aria-label="異尺度対応"><option>いいえ</option></select></span></label>
          </div>
        </section>
        <section>
          <h2><button>線分&amp;矢印<svg class="s10"><use href="#up"/></svg></button></h2>
          <div class="rows">
            <label><svg><use href="#dl1"/></svg><span class="combo"><select aria-label="寸法線1"><option>オン</option></select></span></label>
            <label><svg><use href="#dl2"/></svg><span class="combo"><select aria-label="寸法線2"><option>オン</option></select></span></label>
            <label><svg><use href="#dlcol"/></svg><span class="combo"><span class="dot hollow"></span><select aria-label="寸法線の色"><option>ByBlock</option></select></span></label>
            <label><svg><use href="#dllt"/></svg><span class="combo"><select aria-label="寸法線の線種"><option>ByBlock</option></select></span></label>
            <label><svg><use href="#dllw"/></svg><span class="combo"><span class="rule"></span><select aria-label="寸法線の線幅"><option>ByBlock</option></select></span></label>
            <label><svg><use href="#ex1"/></svg><span class="combo"><select aria-label="補助線1"><option>オン</option></select></span></label>
            <label><svg><use href="#ex2"/></svg><span class="combo"><select aria-label="補助線1の線種"><option>ByBlock</option></select></span></label>
            <label><svg><use href="#ex3"/></svg><span class="combo"><select aria-label="補助線2"><option>オン</option></select></span></label>
          </div>
        </section>
      </div>
      <div class="vscroll"><svg class="s10"><use href="#up"/></svg><i class="thumb"></i><svg class="s10 end"><use href="#dn"/></svg></div>
    </div>
    <div class="callout"></div>
  </aside>

  <section class="work">
    <div class="tabs"></div>
    <div class="canvas">
      <svg class="drawing" aria-label="図面">
        <path d="M111.500 353.500h96v-42h96M111.500 486.500h96v-42h96" fill="none" stroke="#0f0"/>
        <path d="M111.500 255v98M303.500 255v56M111 263.500h193" stroke="#4aa3ff"/>
        <path d="M118 263.500h4M294 263.500h4" stroke="#4aa3ff" stroke-width="4"/>
        <path d="M111.500 396v72M303.500 396v30M111 396.500h193M132 391l-19 5.500 19 5.500M284 391l19 5.500-19 5.500" fill="none" stroke="#808080"/>
        <text x="208" y="259" fill="#4aa3ff">30</text>
        <text x="208" y="392" fill="#808080">30</text>
        <g fill="#003cff" stroke="#808080"><path d="M200.500 239.500h14v14h-14zM104.500 256.500h14v14h-14zM296.500 256.500h14v14h-14zM296.500 304.500h14v14h-14zM104.500 346.500h14v14h-14z"/><circle cx="128" cy="263" r="6.500"/><circle cx="288" cy="263" r="6.500"/></g>
      </svg>
      <div class="floats left">
        <div class="float"><button class="tool" aria-label="新規"><svg><use href="#new"/></svg></button><button class="tool" aria-label="開く"><svg><use href="#open"/></svg></button><button class="tool" aria-label="保存"><svg><use href="#save"/></svg></button><button class="tool" aria-label="名前を付けて保存"><svg><use href="#saveas"/></svg></button><button class="tool" aria-label="シート"><svg><use href="#sheet"/></svg></button><button class="tool" aria-label="シート設定"><svg><use href="#sheet2"/></svg></button><button class="tool" aria-label="背景"><svg><use href="#view"/></svg></button><span class="sep"></span><button class="tool" aria-label="印刷"><svg><use href="#print"/></svg></button><button class="tool" aria-label="印刷設定"><svg><use href="#printset"/></svg></button><button class="tool" aria-label="印刷プレビュー"><svg><use href="#preview"/></svg></button><span class="sep"></span><button class="tool" aria-label="元に戻す"><svg><use href="#undo"/></svg></button><button class="drop" aria-label="元に戻す履歴"><svg><use href="#down"/></svg></button><button class="tool" aria-label="やり直し"><svg><use href="#redo"/></svg></button><button class="drop muted" aria-label="やり直し履歴"><svg><use href="#down"/></svg></button><button class="tool" aria-label="画面移動"><svg><use href="#pan"/></svg></button><button class="close" aria-label="閉じる"><svg><use href="#x"/></svg></button></div>
        <div class="float"><button class="tool" aria-label="線分"><svg><use href="#line"/></svg></button><button class="tool" aria-label="長方形"><svg><use href="#rect"/></svg></button><button class="tool" aria-label="円"><svg><use href="#circle"/></svg></button><button class="tool" aria-label="複写"><svg><use href="#copyent"/></svg></button><button class="tool" aria-label="移動"><svg><use href="#move"/></svg></button><button class="tool" aria-label="鏡像"><svg><use href="#mirror"/></svg></button><button class="tool" aria-label="トリム"><svg><use href="#trimx"/></svg></button><button class="tool" aria-label="延長"><svg><use href="#extend"/></svg></button><button class="tool" aria-label="ストレッチ"><svg><use href="#stretch"/></svg></button><button class="tool" aria-label="部分削除"><svg><use href="#split"/></svg></button><button class="tool" aria-label="面取り"><svg><use href="#chamfer"/></svg></button><button class="tool" aria-label="フィレット"><svg><use href="#fillet"/></svg></button><button class="tool" aria-label="回転"><svg><use href="#rotate"/></svg></button><button class="tool" aria-label="計測"><svg><use href="#measure"/></svg></button><button class="tool" aria-label="削除"><svg><use href="#erase"/></svg></button><button class="close" aria-label="閉じる"><svg><use href="#x"/></svg></button></div>
      </div>
      <div class="floats right">
        <div class="float"><span class="floatlabel">変更</span><button class="tool k green">外</button><button class="tool k">中</button><button class="tool k blue">隠</button><button class="tool k yellow">想</button><button class="tool k">細</button><button class="tool k white">現</button><button class="tool k">寸</button><button class="tool k red">枠</button><button class="close" aria-label="閉じる"><svg><use href="#x"/></svg></button></div>
        <div class="float"><span class="floatlabel">線種</span><button class="tool k green">外</button><button class="tool k">中</button><button class="tool k blue">隠</button><button class="tool k yellow">想</button><button class="tool k">細</button><button class="tool k white">現</button><button class="tool k">寸</button><button class="tool k red">枠</button><button class="close" aria-label="閉じる"><svg><use href="#x"/></svg></button></div>
      </div>
      <section class="cmd">
        <div class="cmdhead"><svg class="s18" viewBox="0 0 18 18"><path d="M2 1q7 0 6 9H5z" fill="#8cc63f"/><path d="M8 1l7 9H7z" fill="#8bbdd0"/><path d="M0 10h18v7H0z"/><path d="M2 12h2v1.500H2V15h2.500M6 12h2v3H6zM10.500 12v3M13 12h2v3h-2zM13 13.500h2" fill="none" stroke="#fff"/></svg><h2>コマンド ウィンドウ</h2><button aria-label="閉じる"><svg viewBox="0 0 12 12"><path d="M1 1l10 10M11 1L1 11" stroke="#888"/></svg></button></div>
        <div class="cmdbody">
          <div class="log"><p>: «キャンセル»</p><p>: «キャンセル»</p><p>: «キャンセル»</p><p>: «キャンセル»</p><p>: «キャンセル»</p><p>: «キャンセル»</p><p>: «キャンセル»</p><p>: «キャンセル»</p><p>: REBUILDDIMENSION</p><p>アクティブな寸法スタイル: 寸法設定1</p><p><b>寸法を指定»</b></p><p>1 個検出</p><p><b>寸法を指定»</b></p><p>: ._MAINSELECT</p></div>
          <div class="vscroll low"><svg class="s10"><use href="#up"/></svg><i class="thumb"></i><svg class="s10"><use href="#dn"/></svg></div>
        </div>
        <input class="cmdinput" aria-label="コマンド" value=":">
      </section>
    </div>
    <div class="vscroll mid"><svg class="s10"><use href="#up"/></svg><i class="thumb"></i><svg class="s10"><use href="#dn"/></svg></div>
    <div class="hscroll"><svg class="s10"><use href="#lf"/></svg><i class="thumb"></i><svg class="s10"><use href="#rt"/></svg></div>
  </section>
</main>

<footer class="status">
  <span class="version">DraftSight 2018 x64</span>
  <div class="group"><button aria-label="スナップ"><svg class="s18"><use href="#snap"/></svg></button><button aria-label="グリッド"><svg class="s18"><use href="#grid"/></svg></button><button class="on" aria-label="直交"><svg class="s18"><use href="#ortho"/></svg></button></div>
  <div class="group"><button aria-label="極"><svg class="s18"><use href="#polar"/></svg></button><button class="on" aria-label="Eスナップ"><svg class="s18"><use href="#esnap"/></svg></button><button class="on" aria-label="Eトラック"><svg class="s18"><use href="#etrack"/></svg></button></div>
  <div class="group notes"><button class="anno">注釈<svg class="s10"><use href="#dn"/></svg></button><span>(1:1)</span></div>
  <span class="coords">(204.01835124,176.07703172,0)</span>
</footer>
</body>
</html>
```
FILE: styles.css
```
* { box-sizing: border-box; }
html, body { height: 100%; }
body {
  margin: 0;
  display: flex;
  flex-direction: column;
  background: #f0f0f0;
  color: #000;
  font: 12px/16px "Noto Sans CJK JP", sans-serif;
  font-feature-settings: "palt";
  overflow: hidden;
}
button, input, select { font: inherit; font-feature-settings: inherit; color: inherit; margin: 0; padding: 0; border: 0; border-radius: 0; background: none; outline: 0; }
button { display: flex; align-items: center; justify-content: center; flex: none; }
h1, h2, p, ul { margin: 0; padding: 0; font-size: inherit; font-weight: normal; }
svg { display: block; flex: none; }
.sprite { position: absolute; width: 0; height: 0; }
.s10 { width: 10px; height: 10px; }
.s16 { width: 16px; height: 16px; }
.s18 { width: 18px; height: 18px; }
.s20 { width: 20px; height: 20px; }

.combo { display: flex; align-items: center; height: 20px; background: #fff; border: 1px solid #9a9a9e; min-width: 0; }
.combo select { flex: 1; min-width: 0; appearance: none; padding-left: 2px; height: 18px; line-height: 18px; }
.combo::after {
  content: "";
  width: 16px;
  align-self: stretch;
  border: 1px solid #adadad;
  background: #e3e3e3 url("data:image/svg+xml,%3Csvg xmlns='http://www.w3.org/2000/svg' width='10' height='6'%3E%3Cpath d='M1 1l4 4 4-4' fill='none' stroke='%23555'/%3E%3C/svg%3E") center no-repeat;
}
.dot { width: 11px; height: 11px; margin: 0 2px 0 6px; border: 1px solid #333; border-radius: 50%; background: #777; }
.hollow { background: #fff; }
.rule { width: 32px; height: 1px; margin: 0 0 0 4px; background: #000; }

.tool { width: 27px; height: 27px; }
.tool svg { width: 18px; height: 18px; }
.drop { width: 9px; height: 27px; color: #333; }
.drop svg { width: 8px; height: 18px; }
.muted { color: #777; }
.more { width: 16px; }
.more svg { width: 8px; }
.split { width: 4px; align-self: stretch; border-left: 1px solid #a0a0a0; border-right: 1px solid #fff; background-clip: padding-box; }
.sep { width: 6px; height: 22px; align-self: center; background: linear-gradient(#8c8c8c, #8c8c8c) center / 1px 100% no-repeat; }

.header { display: grid; grid-template-columns: 1fr auto 1fr; grid-template-rows: 28px 27px; border-bottom: 2px solid #fff; flex: none; }
.logo { grid-area: 1 / 1 / 3 / 2; width: 32px; height: 34px; margin: 6px 0 0 4px; }
.quick { grid-area: 1 / 1; display: flex; align-items: center; padding-left: 43px; }
.workspace { width: 159px; }
.title { grid-area: 1 / 2; font: 14px/28px "Noto Sans", sans-serif; color: #333; }
.winctl, .docctl { display: flex; align-items: center; }
.winctl { grid-area: 1 / 3; justify-content: flex-end; padding: 0 2px 4px 0; }
.winctl button { width: 35px; height: 24px; }
.winctl svg, .docctl svg { width: 10px; height: 10px; }
.menubar { grid-area: 2 / 1 / 3 / 4; display: flex; justify-content: space-between; padding-left: 50px; }
.menubar ul { display: grid; grid-template-columns: 66px 55px 56px 52px 83px 58px 57px 59px 60px 57px 79px 60px; align-items: center; list-style: none; padding-top: 5px; }
.menubar a { font-size: 11px; color: #111; text-decoration: none; white-space: nowrap; }
.docctl { padding: 0 1px 4px 0; }
.docctl button { width: 18px; height: 20px; }

.layerbar { display: flex; align-items: center; height: 28px; flex: none; border-bottom: 1px solid #a0a0a0; }
.layer { width: 29px; }
.layers { width: 300px; }
.states { width: 76px; height: 16px; margin: 0 6px 0 2px; }
.std { width: 132px; margin-right: 2px; }
.toolbar { display: flex; align-items: center; height: 31px; flex: none; padding-left: 1px; border-top: 1px solid #fff; border-bottom: 2px solid #a9a9a9; }

.main { display: flex; flex: 1; min-height: 0; }
.strip { width: 24px; flex: none; display: flex; flex-direction: column; align-items: center; gap: 10px; padding: 5px 0 2px; background: #c0c0c0; border: 1px solid #8e8e8e; border-top: 0; }
.pin { width: 18px; height: 20px; border: 1px solid #111; }
.striptitle { margin-top: auto; writing-mode: vertical-rl; text-orientation: sideways; transform: rotate(180deg); font-weight: bold; }
.strip .s18 { margin-top: -4px; }
.panel { position: relative; width: 321px; flex: none; display: flex; flex-direction: column; padding: 10px 11px 12px; }
.panelbtns { display: flex; gap: 8px; padding: 7px 0 7px 1px; }
.panelbtns button, .group button { width: 25px; height: 24px; border: 1px solid #adadad; background: #e3e3e3; }
.tree { flex: 1; min-height: 0; display: flex; border: 1px solid #828790; overflow: hidden; }
.treebody { flex: 1; padding: 10px 0 0 10px; overflow: hidden; }
.treebody h2 button { width: 100%; height: 20px; justify-content: space-between; padding: 0 5px; font-weight: bold; background: #dfe3ff; border: 1px solid #828790; box-shadow: inset 1px 1px #fff; }
.rows { display: grid; gap: 2px; padding-top: 13px; margin-bottom: 6px; border: solid #dcdcdc; border-width: 0 0 1px 1px; }
.rows label { display: grid; grid-template-columns: 38px 1fr; height: 20px; align-items: center; }
.rows label > svg { width: 18px; height: 18px; margin-left: 10px; }
.rows .combo, .rows input { width: 100%; height: 100%; }
.rows input { background: #fff; border: 1px solid #9a9a9e; padding-left: 2px; }
.rows input.active { background: #b1cfec; }
.rows label.tall { height: 22px; }
.noiso { width: 12px; height: 14px; margin: 0 2px 0 5px; }
.callout { position: absolute; left: 14px; right: 28px; top: 334px; height: 49px; border: 4px solid #f60000; border-radius: 7px; pointer-events: none; }

.vscroll { width: 27px; flex: none; display: flex; flex-direction: column; align-items: center; padding: 4px 0 4px 10px; gap: 4px; }
.thumb { background: #cdcdcd; }
.vscroll .thumb { width: 14px; height: 115px; }
.vscroll .end { margin-top: auto; }

.work { flex: 1; min-width: 0; display: grid; grid-template-columns: 1fr 14px; grid-template-rows: 28px 1fr 15px; }
.tabs { grid-column: 1 / 3; background: #eeeef4; border-bottom: 4px solid #fff; box-shadow: inset 0 -1px #aaa, inset -1px 0 #aaa; }
.canvas { position: relative; background: #000; overflow: hidden; min-height: 0; }
.drawing { position: absolute; width: 100%; height: 100%; }
.drawing text { font: 500 34px "Liberation Sans Narrow", "Roboto Condensed", "Noto Sans CJK JP", sans-serif; font-feature-settings: "hwid"; text-anchor: middle; }
.vscroll.mid { width: 14px; padding: 4px 0 2px; justify-content: space-between; }
.mid .thumb { width: 11px; height: 14px; }
.hscroll { grid-column: 1; display: flex; align-items: center; justify-content: space-between; padding: 0 4px 0 calc(57% - 4px); }
.hscroll .thumb { width: 10px; height: 11px; }

.floats { position: absolute; top: 10px; display: flex; flex-direction: column; align-items: flex-start; gap: 6px; }
.left { left: 291px; }
.right { right: 12px; gap: 5px; }
.float { display: flex; align-items: center; height: 30px; background: #f0f0f0; border: 1px solid #c4c4c4; }
.floatlabel { width: 39px; padding-left: 7px; }
.close { width: 12px; height: 14px; align-self: flex-start; color: #444; }
.close svg { width: 6px; height: 6px; }
.k { font-weight: 900; font-size: 15px; color: #444; }
.green { color: #0f0; }
.blue { color: #0000c4; }
.yellow { color: #ff0; }
.white { color: #fff; }
.red { color: #f00; }

.cmd { position: absolute; left: 339px; top: 227px; width: 344px; background: #fff; }
.cmdhead { display: flex; align-items: center; height: 30px; padding: 0 8px; gap: 4px; color: #888; font-size: 11px; }
.cmdhead h2 { flex: 1; }
.cmdhead button, .cmdhead button svg { width: 12px; height: 12px; }
.cmdhead button { margin-right: 2px; }
.cmdbody { display: flex; height: 219px; border: 1px solid #828790; overflow: hidden; }
.log { flex: 1; display: flex; flex-direction: column; justify-content: flex-end; padding: 0 4px 3px; overflow: hidden; font: 13px/16px "Liberation Sans", "Noto Sans CJK JP", sans-serif; font-feature-settings: "palt"; }
.log p { flex: none; height: 16px; white-space: nowrap; }
.vscroll.low { width: 17px; padding: 3px 0; background: #f0f0f0; }
.low .thumb { height: 22px; margin-top: auto; }
.cmdinput { display: block; width: 100%; height: 16px; padding-left: 4px; line-height: 16px; color: #356; }

.status { display: flex; align-items: center; height: 34px; flex: none; gap: 6px; border-bottom: 2px solid #222; font-size: 11px; white-space: nowrap; }
.version { flex: 0 0 528px; padding-left: 2px; font-family: "Noto Sans", sans-serif; }
.group { display: flex; align-items: center; gap: 8px; height: 28px; padding: 0 2px; border: 1px solid #dcdcdc; }
.group .on { background: #cce4f7; border-color: #005499; }
.group .anno { width: 58px; height: 20px; gap: 12px; font-size: 12px; }
```
